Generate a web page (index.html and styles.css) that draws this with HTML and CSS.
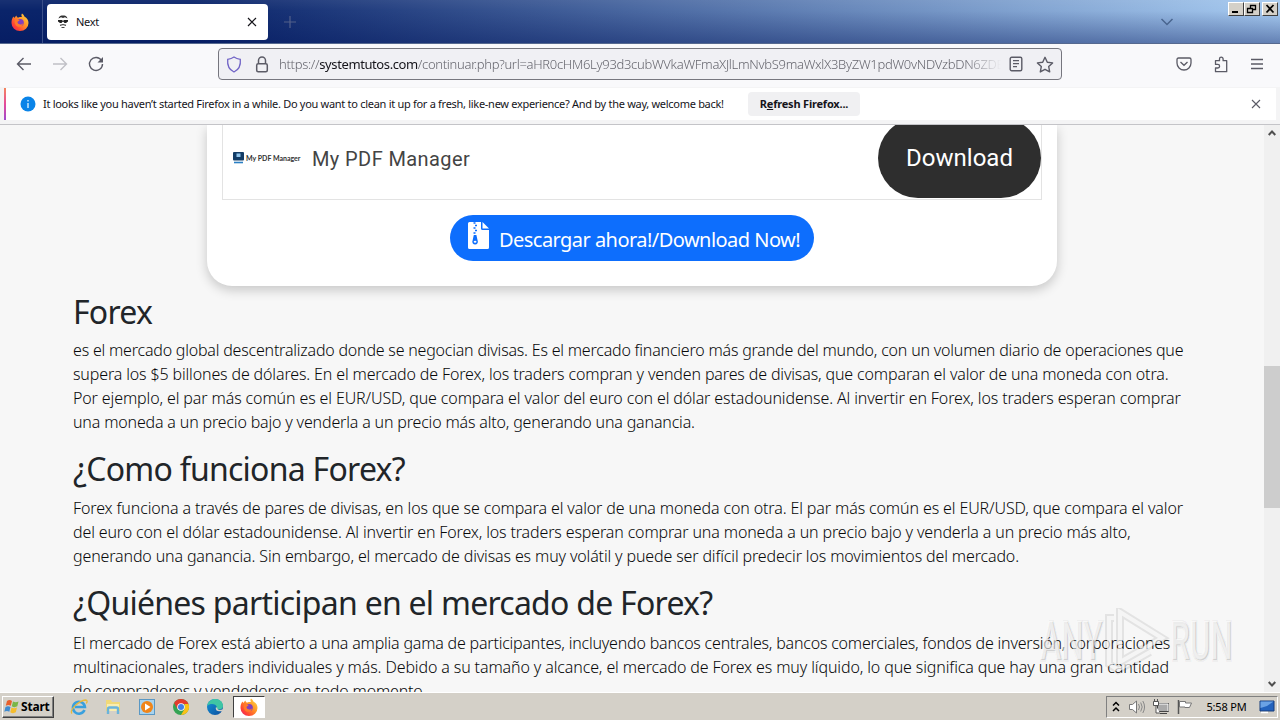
FILE: index.html
```
<!DOCTYPE html>
<html lang="es">
<head>
    <meta charset="UTF-8">
    <meta name="viewport" content="width=device-width, initial-scale=1.0">
    <title>Next</title>
    <link rel="stylesheet" href="styles.css">
</head>
<body>
    <svg class="defs" width="0" height="0">
        <defs>
            <linearGradient id="fire" x1="1" y1="0" x2="0" y2="1">
                <stop offset="0" stop-color="#ffe14a"/>
                <stop offset=".4" stop-color="#ff9727"/>
                <stop offset=".75" stop-color="#ff4433"/>
                <stop offset="1" stop-color="#e3127c"/>
            </linearGradient>
            <linearGradient id="edge" x1="0" y1="0" x2="1" y2="1">
                <stop offset="0" stop-color="#1595d8"/>
                <stop offset="1" stop-color="#0b4d9d"/>
            </linearGradient>
        </defs>
        <symbol id="firefox" viewBox="0 0 18 18">
            <path d="M11 .5c2 1.300 2.400 3 2.400 3C16 5 17.500 7 17.500 10a8.500 8 0 0 1-17 0C.5 7 1.200 5.200 2.500 3.500l.8 1.600C4 3.800 5 3 5.500 2.500c0 1 .6 1.700 1.500 2.200C8 4 10 4 11 4c-.8-1-.7-2.500 0-3.500z" fill="url(#fire)"/>
            <circle cx="9.300" cy="9.600" r="3.500" fill="#8140bd"/>
            <path d="M4 6.500c2-.5 3.500 0 4.600 1.200-1.500.3-2.200 1-2 2.100.7 2 4 2.400 5.400.4-.3 3-3.200 4.300-5.500 3.300C4.300 12.500 3 9.300 4 6.500z" fill="#ff7a2a"/>
        </symbol>
    </svg>

    <div class="tab-bar">
        <div class="view-button"><svg width="18" height="18"><use href="#firefox"/></svg></div>
        <div class="tab">
            <svg class="favicon" width="12" height="14" viewBox="0 0 12 14">
                <path d="M1.500 3.500C2 1 4 .5 6 .5s4 .5 4.500 3L8 2.300 6 3 4 2.300z" fill="#333"/>
                <path d="M1 5h4.500v1h1V5H11v1.500L9 8H7.500L6.500 6.800h-1L4.500 8H3L1 6.500z" fill="#222"/>
                <path d="M3 10.300l3-.8 3 .8M4.500 12.500h3" stroke="#444" fill="none" stroke-width="1.200"/>
            </svg>
            <span class="tab-title">Next</span>
            <svg width="10" height="10" viewBox="0 0 10 10"><path d="M1 1l8 8M9 1L1 9" stroke="#15141a" stroke-width="1.200"/></svg>
        </div>
        <svg class="new-tab" width="12" height="12" viewBox="0 0 12 12"><path d="M6 0v12M0 6h12" stroke="#53608a" stroke-width="1.200"/></svg>
        <svg class="tabs-list" width="14" height="8" viewBox="0 0 14 8"><path d="M1.500 1L7 6.500 12.500 1" stroke="#49658f" stroke-width="1.500" fill="none"/></svg>
        <div class="window-buttons">
            <span class="win-btn"><svg width="12" height="10" viewBox="0 0 12 10"><path d="M2 8h6" stroke="#000" stroke-width="2"/></svg></span>
            <span class="win-btn"><svg width="12" height="10" viewBox="0 0 12 10"><path d="M4.500 4V1.500h5v4H7M4 1.500h6M1.500 4.500h5v4h-5zM1 4.500h6" stroke="#000" fill="none" stroke-width="1.300"/></svg></span>
            <span class="win-btn win-close"><svg width="12" height="10" viewBox="0 0 12 10"><path d="M2.500 1l7 7.500M9.500 1l-7 7.500" stroke="#000" stroke-width="1.800"/></svg></span>
        </div>
    </div>

    <div class="nav-bar">
        <div class="nav-buttons">
            <svg width="16" height="16" viewBox="0 0 16 16"><path d="M15 8H1.500M7.500 2l-6 6 6 6" stroke="#5b5b66" stroke-width="1.400" fill="none"/></svg>
            <svg width="16" height="16" viewBox="0 0 16 16"><path d="M1 8h13.500M8.500 2l6 6-6 6" stroke="#c0c0c6" stroke-width="1.400" fill="none"/></svg>
            <svg width="16" height="16" viewBox="0 0 16 16"><path d="M13.500 4.500A6.500 6.500 0 1 0 14.500 8" stroke="#5b5b66" stroke-width="1.400" fill="none"/><path d="M15 1v5.500H9.500z" fill="#5b5b66"/></svg>
        </div>
        <div class="url-bar">
            <svg width="16" height="17" viewBox="0 0 16 17"><path d="M8 1c2 1.400 4 2 6.300 2.300.5 5-.8 10.200-6.300 12.700C2.500 13.500 1.200 8.300 1.700 3.300 4 3 6 2.400 8 1z" stroke="#7063c6" stroke-width="1.300" fill="none"/></svg>
            <svg width="14" height="17" viewBox="0 0 14 17"><path d="M3.500 7.500V4.500a3.500 3.500 0 0 1 7 0v3" stroke="#5b5b66" stroke-width="1.500" fill="none"/><rect x="1.700" y="7.700" width="10.600" height="8" rx="1.500" stroke="#5b5b66" stroke-width="1.500" fill="none"/></svg>
            <div class="url">https://<b>systemtutos.com</b>/continuar.php?url=aHR0cHM6Ly93d3cubWVkaWFmaXJlLmNvbS9maWxlX3ByZW1pdW0vNDVzbDN6ZDE</div>
            <svg width="14" height="16" viewBox="0 0 14 16"><rect x="1.200" y="1.200" width="11.600" height="13.600" rx="1.500" stroke="#5b5b66" stroke-width="1.400" fill="none"/><path d="M4 4.700h6M4 7.700h6M4 10.700h4" stroke="#5b5b66" stroke-width="1.200"/></svg>
            <svg width="18" height="17" viewBox="0 0 18 17"><path d="M9 1.300l2.300 4.900 5.300.7-3.900 3.700 1 5.300L9 13.300l-4.700 2.600 1-5.300L1.400 6.900l5.300-.7z" stroke="#5b5b66" stroke-width="1.400" fill="none" stroke-linejoin="round"/></svg>
        </div>
        <div class="nav-tools">
            <svg width="16" height="16" viewBox="0 0 16 16"><path d="M2.500 2h11Q15 2 15 3.500V7A7 7 0 0 1 1 7V3.500Q1 2 2.500 2z" stroke="#5b5b66" stroke-width="1.300" fill="none"/><path d="M4.500 6L8 9.300 11.500 6" stroke="#5b5b66" stroke-width="1.300" fill="none"/></svg>
            <svg width="16" height="17" viewBox="0 0 16 17"><path d="M2.500 7.500V4.700h4V3a1.800 1.800 0 0 1 3.600 0v1.700h3.600v11H2.500V12h2.300a1.800 1.800 0 0 0 0-3.600H2.500z" stroke="#5b5b66" stroke-width="1.300" fill="none" stroke-linejoin="round"/></svg>
            <svg width="14" height="12" viewBox="0 0 14 12"><path d="M1 1.500h12M1 6h12M1 10.500h12" stroke="#5b5b66" stroke-width="1.300"/></svg>
        </div>
    </div>

    <div class="notice-wrap">
        <div class="notice">
            <svg width="16" height="16" viewBox="0 0 16 16"><circle cx="8" cy="8" r="7.500" fill="#0a84e8"/><path d="M8 4v1.600M8 7v5" stroke="#d5eeff" stroke-width="1.400"/></svg>
            <span class="notice-text">It looks like you haven’t started Firefox in a while. Do you want to clean it up for a fresh, like-new experience? And by the way, welcome back!</span>
            <span class="refresh">R<u>e</u>fresh Firefox...</span>
            <svg class="notice-close" width="10" height="10" viewBox="0 0 10 10"><path d="M1 1l8 8M9 1L1 9" stroke="#5b5b66" stroke-width="1.100"/></svg>
        </div>
    </div>

    <div class="viewport">
        <div class="page">
            <div class="card">
                <div class="ad">
                    <div class="ad-logo">
                        <svg width="11" height="12" viewBox="0 0 11 12"><rect width="11" height="8.500" rx="1" fill="#123c66"/><rect x="3.500" y="1.500" width="4" height="3.500" fill="#8fc3ea"/><path d="M1 10.500h9" stroke="#2a7fc4" stroke-width="1.600"/></svg>
                        <span>My PDF Manager</span>
                    </div>
                    <span class="ad-title">My PDF Manager</span>
                    <div class="ad-button">Download</div>
                </div>
                <div class="download">
                    <svg width="21" height="27" viewBox="0 0 21 27"><path d="M0 1.500Q0 0 1.500 0H13v6.500Q13 8 14.500 8H21v17.500Q21 27 19.500 27h-18Q0 27 0 25.500z" fill="#fff"/><path d="M14.500 0L21 6.600h-6.500z" fill="#fff"/><path d="M5.500 1h2M7 3.500h2M5.500 6h2M7 8.500h2M5.500 11h2" stroke="#0d6efd" stroke-width="1.300"/><path d="M5.800 13h2.600l1.200 5.500a2.800 2.700 0 1 1-5 0z" fill="#0d6efd"/><ellipse cx="7.100" cy="19.700" rx="1.400" ry="1" fill="#fff"/></svg>
                    <span>Descargar ahora!/Download Now!</span>
                </div>
            </div>
            <h2 class="forex">Forex</h2>
            <p>
                <span class="ls-20">es el mercado global descentralizado donde se negocian divisas. Es el mercado financiero más grande del mundo, con un volumen diario de operaciones que</span><br>
                <span class="ls-14">supera los $5 billones de dólares. En el mercado de Forex, los traders compran y venden pares de divisas, que comparan el valor de una moneda con otra.</span><br>
                <span class="ls-12">Por ejemplo, el par más común es el EUR/USD, que compara el valor del euro con el dólar estadounidense. Al invertir en Forex, los traders esperan comprar</span><br>
                <span class="ls-17">una moneda a un precio bajo y venderla a un precio más alto, generando una ganancia.</span>
            </p>
            <h2>¿Como funciona Forex?</h2>
            <p>
                <span class="ls-12">Forex funciona a través de pares de divisas, en los que se compara el valor de una moneda con otra. El par más común es el EUR/USD, que compara el valor</span><br>
                <span class="ls-14">del euro con el dólar estadounidense. Al invertir en Forex, los traders esperan comprar una moneda a un precio bajo y venderla a un precio más alto,</span><br>
                <span class="ls-14">generando una ganancia. Sin embargo, el mercado de divisas es muy volátil y puede ser difícil predecir los movimientos del mercado.</span>
            </p>
            <h2>¿Quiénes participan en el mercado de Forex?</h2>
            <p>
                <span class="ls-20">El mercado de Forex está abierto a una amplia gama de participantes, incluyendo bancos centrales, bancos comerciales, fondos de inversión, corporaciones</span><br>
                <span class="ls-12">multinacionales, traders individuales y más. Debido a su tamaño y alcance, el mercado de Forex es muy líquido, lo que significa que hay una gran cantidad</span><br>
                <span class="ls-17">de compradores y vendedores en todo momento.</span>
            </p>
        </div>
        <div class="scrollbar">
            <svg width="8" height="6" viewBox="0 0 8 6"><path d="M.7 5L4 1.500 7.300 5" stroke="#505050" stroke-width="2" fill="none"/></svg>
            <div class="thumb"></div>
            <svg width="8" height="6" viewBox="0 0 8 6"><path d="M.7 1L4 4.500 7.300 1" stroke="#505050" stroke-width="2" fill="none"/></svg>
        </div>
    </div>

    <div class="taskbar">
        <div class="start">
            <svg width="16" height="15" viewBox="0 0 16 15"><path d="M3 2Q5.500 0 8 2L6.800 6.800Q4.500 5 1.800 6.800z" fill="#e8602c"/><path d="M9 2.500q2.500 1.500 5.500 0L13.300 7.300Q10.500 9 7.800 7.200z" fill="#7ab648"/><path d="M1.500 8Q4 6.500 6.500 8L5.300 12.800Q3 11 .3 12.800z" fill="#3f8bd0"/><path d="M7.500 8.500q2.500 1.500 5.500 0L11.800 13.300Q9 15 6.300 13.200z" fill="#f5bd2e"/></svg>
            <span>Start</span>
        </div>
        <div class="quick-launch">
            <svg width="18" height="18" viewBox="0 0 18 18"><path d="M14.500 12a6 6 0 1 1 .4-3H5" stroke="#39a0de" stroke-width="2.600" fill="none"/><path d="M2 15.500C-1 12 9 2.500 15.500 2c2 0 2 1.500.8 3.500" stroke="#e9b93a" stroke-width="1.300" fill="none"/></svg>
            <svg width="18" height="18" viewBox="0 0 18 18"><path d="M2 2h5l1 2h8v9H2z" fill="#f1d978"/><path d="M3 6h12v7H3z" fill="#f9edb0"/><path d="M4 16v-5q0-1.500 1.500-1.500h7Q14 9.500 14 11v5" stroke="#6bb4da" stroke-width="2.400" fill="none"/></svg>
            <svg width="18" height="18" viewBox="0 0 18 18"><rect x="1.500" y="1.500" width="15" height="15" fill="#a8d3ee" stroke="#5a98c4"/><circle cx="9" cy="9" r="6" fill="#f08519"/><path d="M7 5.500v7L12.500 9z" fill="#fff"/></svg>
            <svg width="18" height="18" viewBox="0 0 18 18"><circle cx="9" cy="9" r="8" fill="#34a353"/><path d="M2.100 5A8 8 0 0 1 16.500 6H9L5.500 11z" fill="#e33b2e"/><path d="M9 17l3.500-6V6h4A8 8 0 0 1 9 17z" fill="#fbc116"/><circle cx="9" cy="9" r="3.800" fill="#fff"/><circle cx="9" cy="9" r="3" fill="#3f7ee8"/></svg>
            <svg width="18" height="18" viewBox="0 0 18 18"><circle cx="9" cy="9" r="8" fill="url(#edge)"/><path d="M1.200 8C2 3 6 1 9 1c5 0 8 3 8 7 0 2-1.500 3.500-4 3.500-2 0-3-1-2.200-2.500C10 5.500 4 5 1.200 8z" fill="#3fc5a4"/><path d="M10.500 9.500c-.5 3 3 4 6.500 2.300" stroke="#d4d0c8" stroke-width="1.400" fill="none"/></svg>
        </div>
        <div class="task-active"><svg width="18" height="18"><use href="#firefox"/></svg></div>
        <div class="tray">
            <svg width="8" height="12" viewBox="0 0 8 12"><path d="M1 4.500l3-3 3 3M1 10l3-3 3 3" stroke="#000" stroke-width="1.500" fill="none"/></svg>
            <svg class="speaker" width="18" height="16" viewBox="0 0 18 16"><path d="M1.500 5.500h3L8.500 2v12l-4-3.500h-3z" fill="#fff" stroke="#777"/><path d="M10.500 5q2 3 0 6M12.700 3.500q3 4.500 0 9M14.800 2q3.500 6 0 12" stroke="#888" fill="none"/></svg>
            <svg width="18" height="16" viewBox="0 0 18 16"><path d="M5.500 4.500h11v8h-11zM8 14.500h7" fill="#aaa" stroke="#444"/><path d="M6 5h10v7" fill="none" stroke="#fff"/><path d="M1.500 2.500h5v4h-5zM4 7v7h4M2.500 0v2M5.500 0v2" fill="#fff" stroke="#555"/></svg>
            <svg width="18" height="16" viewBox="0 0 18 16"><path d="M2.500 1v14" stroke="#555" stroke-width="1.500"/><path d="M3.500 2.500h6v1.500h6l-2 4.500H9V8H3.500z" fill="#fff" stroke="#777"/></svg>
            <span class="clock">5:58 PM</span>
            <svg width="16" height="14" viewBox="0 0 16 14"><path d="M1 1h14v10H1z" fill="#2463bd" stroke="#173d7a"/><path d="M1.500 1.500h13L8 6l-6.500 2z" fill="#6ba2e4"/><path d="M2 12.500h7" stroke="#fff" stroke-width="1.500"/></svg>
        </div>
    </div>

    <svg class="watermark" width="200" height="70" viewBox="0 0 200 70">
        <g class="wm-shadow">
            <text x="5" y="52" textLength="62" lengthAdjust="spacingAndGlyphs">ANY</text>
            <text x="135" y="52" textLength="62" lengthAdjust="spacingAndGlyphs">RUN</text>
        </g>
        <text x="4" y="51" textLength="62" lengthAdjust="spacingAndGlyphs">ANY</text>
        <text x="134" y="51" textLength="62" lengthAdjust="spacingAndGlyphs">RUN</text>
        <path class="wm-dark" d="M84 4l42 26-42 24zM78 10h-5v46l9 6 32-18"/>
        <path class="wm-line" d="M84 4l42 26-42 24zM78 10h-5v46l9 6 32-18"/>
    </svg>
</body>
</html>
```
FILE: styles.css
```
* {
    box-sizing: border-box;
}

body {
    margin: 0;
    width: 1280px;
    height: 720px;
    overflow: hidden;
    display: flex;
    flex-direction: column;
    background: #f7f7f7;
    font-family: "Noto Sans", "Open Sans", sans-serif;
    color: #212529;
}

svg {
    display: block;
    flex: none;
}

.defs {
    position: absolute;
}

.tab-bar {
    height: 44px;
    flex: none;
    display: flex;
    align-items: center;
    background: linear-gradient(to bottom, rgba(255, 255, 255, 0.06), rgba(0, 10, 60, 0) 25%, rgba(0, 20, 90, 0.4)), linear-gradient(to right, #0a246a 15%, #a6caf0);
    border-bottom: 1px solid #56698f;
}

.view-button {
    width: 43px;
    height: 43px;
    padding-left: 11px;
    display: flex;
    align-items: center;
    border-right: 1px solid #3a4f89;
}

.tab {
    width: 221px;
    height: 36px;
    margin-left: 4px;
    padding: 0 11px 0 10px;
    display: flex;
    align-items: center;
    background: #fff;
    border-radius: 4px;
}

.tab-title {
    flex: 1;
    margin-left: 7px;
    font-size: 11px;
    letter-spacing: -0.3px;
    color: #15141a;
}

.new-tab {
    margin-left: 16px;
}

.tabs-list {
    margin-left: auto;
}

.window-buttons {
    display: flex;
    align-self: flex-start;
    margin: 2px 2px 0 54px;
}

.win-btn {
    width: 16px;
    height: 14px;
    padding: 1px;
    background: #d4d0c8;
    border: 1px solid;
    border-color: #fff #404040 #404040 #fff;
}

.win-close {
    margin-left: 2px;
}

.nav-bar {
    height: 43px;
    flex: none;
    padding-bottom: 3px;
    display: flex;
    align-items: center;
    background: #f9f9fb;
}

.nav-buttons {
    width: 218px;
    padding-left: 16px;
    display: flex;
    gap: 20px;
}

.url-bar {
    width: 844px;
    height: 32px;
    padding: 0 7px;
    display: flex;
    align-items: center;
    background: #f0f0f4;
    border: 1px solid #76767e;
    border-radius: 4px;
}

.url-bar svg + svg {
    margin-left: 13px;
}

.url {
    width: 724px;
    margin: 0 8px 0 10px;
    overflow: hidden;
    white-space: nowrap;
    font-size: 13px;
    font-weight: 300;
    letter-spacing: -0.3px;
    color: #66666e;
    mask-image: linear-gradient(to right, #000 95%, transparent);
}

.url b {
    font-weight: 400;
    letter-spacing: -0.4px;
    color: #15141a;
}

.nav-tools {
    margin-left: 114px;
    display: flex;
    align-items: center;
    gap: 21px;
}

.notice-wrap {
    height: 38px;
    flex: none;
    padding: 1px 4px 4px;
    background: #f4f4f5;
    border-bottom: 1px solid #c4c4c8;
}

.notice {
    height: 32px;
    padding: 0 15px 0 14px;
    display: flex;
    align-items: center;
    background: #fff;
    border-left: 2px solid;
    border-image: linear-gradient(to bottom, #f58a5a, #e54a9a, #9a4ad0) 1;
    font-size: 11px;
    color: #15141a;
}

.notice-text {
    width: 684px;
    margin: 0 0 2px 7px;
    white-space: nowrap;
    letter-spacing: -0.29px;
}

.refresh {
    width: 112px;
    height: 24px;
    margin-left: 21px;
    line-height: 24px;
    text-align: center;
    font-weight: 700;
    letter-spacing: -0.2px;
    background: #f0f0f2;
    border-radius: 4px;
}

.notice-close {
    margin-left: auto;
}

.viewport {
    height: 567px;
    flex: none;
    display: flex;
    overflow: hidden;
}

.page {
    flex: 1;
    padding-left: 73px;
}

.card {
    width: 850px;
    height: 161px;
    margin: 0 0 5.6px 134px;
    padding: 0 15px;
    background: #fff;
    border-radius: 0 0 25px 25px;
    box-shadow: 0 4px 12px rgba(0, 0, 0, 0.2);
}

.ad {
    height: 75px;
    padding-left: 10px;
    display: flex;
    align-items: flex-start;
    border: 1px solid #e3e3e3;
    border-top: none;
}

.ad-logo {
    width: 79px;
    height: 66px;
    display: flex;
    align-items: center;
    gap: 2px;
    font: 700 7px Lato, sans-serif;
    color: #333;
}

.ad-title {
    flex: 1;
    line-height: 68px;
    font-family: Roboto, sans-serif;
    font-size: 20px;
    letter-spacing: 0.4px;
    color: #444;
}

.ad-button {
    width: 163px;
    height: 80px;
    margin-top: -7px;
    line-height: 80px;
    text-align: center;
    font-family: Roboto, sans-serif;
    font-size: 24px;
    color: #fff;
    background: #2e2e2e;
    border-radius: 40px;
}

.download {
    width: 364px;
    height: 46px;
    margin: 15px auto 0 228px;
    padding-left: 18px;
    display: flex;
    gap: 10px;
    font-size: 20px;
    line-height: 49px;
    letter-spacing: -0.54px;
    white-space: nowrap;
    color: #fff;
    background: #0d6efd;
    border-radius: 23px;
}

.download svg {
    margin-top: 7px;
}

h2 {
    margin: 0 0 8px;
    font-size: 32px;
    font-weight: 400;
    line-height: 38.4px;
    letter-spacing: -0.74px;
}

.forex {
    padding-top: 1px;
    margin-bottom: 7px;
}

p {
    margin: 0 0 16px;
    font-size: 16px;
    font-weight: 300;
    line-height: 24px;
    white-space: nowrap;
    color: #08090a;
}

/* line by line tracking */
.ls-12 {
    letter-spacing: -0.12px;
}

.ls-14 {
    letter-spacing: -0.14px;
}

.ls-17 {
    letter-spacing: -0.17px;
}

.ls-20 {
    letter-spacing: -0.205px;
}

.scrollbar {
    width: 16px;
    padding: 5px 0;
    display: flex;
    flex-direction: column;
    align-items: center;
    background: #f0f0f0;
}

.thumb {
    width: 16px;
    height: 142px;
    margin: 230px 0 auto;
    background: #cdcdcd;
}

.taskbar {
    height: 28px;
    flex: none;
    padding: 0 2px 0 2px;
    display: flex;
    align-items: center;
    background: #d4d0c8;
    border-top: 1px solid #fff;
}

.start {
    width: 52px;
    height: 22px;
    padding-left: 1px;
    display: flex;
    align-items: center;
    gap: 1px;
    font-size: 12px;
    font-weight: 700;
    letter-spacing: -0.2px;
    color: #000;
    border: 1px solid;
    border-color: #fff #404040 #404040 #fff;
    box-shadow: inset -1px -1px #808080;
}

.quick-launch {
    margin-left: 16px;
    display: flex;
    gap: 16px;
}

.task-active {
    width: 32px;
    height: 22px;
    margin-left: 9px;
    padding: 1px 6px;
    background: #fff;
    border: 1px solid;
    border-color: #404040 #fff #fff #404040;
}

.tray {
    width: 172px;
    height: 22px;
    margin-left: auto;
    padding: 0 2px 0 5px;
    display: flex;
    align-items: center;
    gap: 6px;
    font-size: 11px;
    color: #000;
    border: 1px solid;
    border-color: #808080 #fff #fff #808080;
}

.speaker {
    margin-left: 2px;
}

.clock {
    margin: 0 auto;
    white-space: nowrap;
    letter-spacing: -0.2px;
}

.watermark {
    position: absolute;
    left: 1036px;
    top: 608px;
    font-family: Roboto, sans-serif;
    font-size: 54px;
    font-weight: 500;
    fill: rgba(255, 255, 255, 0.6);
}

.wm-shadow {
    fill: rgba(0, 0, 0, 0.15);
    stroke: rgba(0, 0, 0, 0.04);
    stroke-width: 4;
}

.wm-dark {
    fill: none;
    stroke: rgba(0, 0, 0, 0.08);
    stroke-width: 8;
}

.wm-line {
    fill: none;
    stroke: rgba(255, 255, 255, 0.65);
    stroke-width: 4;
}
```
